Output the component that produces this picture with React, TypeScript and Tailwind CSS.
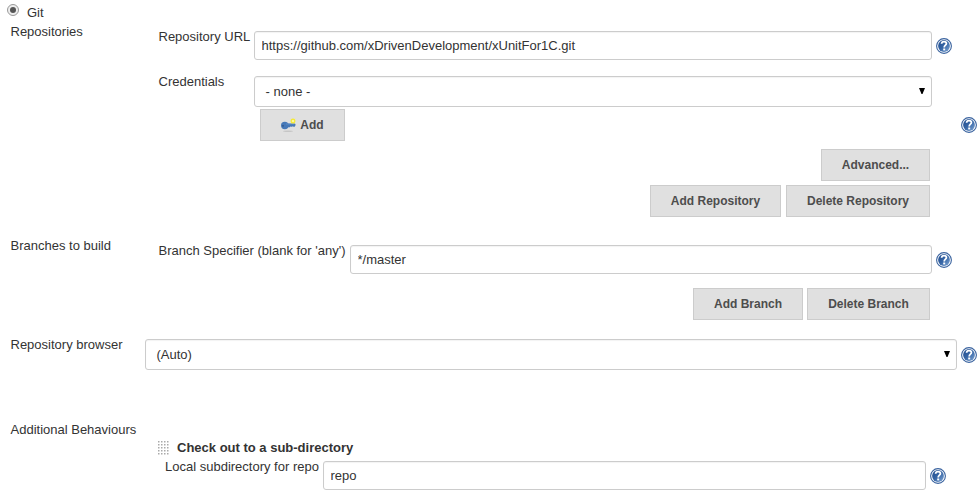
import type { ReactNode } from "react";

function Help({ className = "" }: { className?: string }) {
  return (
    <svg className={`size-4 shrink-0 ${className}`} viewBox="0 0 16 16" role="img" aria-label="Help">
      <defs>
        <linearGradient id="helpFill" x1="0" y1="0" x2="1" y2="1">
          <stop offset="0" stopColor="#1f4a8c" />
          <stop offset="0.5" stopColor="#3766a6" />
          <stop offset="1" stopColor="#83a9d6" />
        </linearGradient>
      </defs>
      <circle cx="8" cy="8" r="7.4" fill="#fff" stroke="#3a639f" strokeWidth="1.1" />
      <circle cx="8" cy="8" r="5.9" fill="url(#helpFill)" />
      <path d="M5.6 5.8C5.7 4.2 6.7 3.7 8 3.7c1.5 0 2.4.8 2.4 1.9C10.4 7.2 8.2 7.2 8.2 9.4" fill="none" stroke="#fff" strokeWidth="1.8" />
      <rect x="7.2" y="10.5" width="2" height="1.9" fill="#fff" />
    </svg>
  );
}

function KeyIcon() {
  return (
    <svg className="size-4 shrink-0" viewBox="0 0 16 16" aria-hidden="true">
      <ellipse cx="8" cy="14.3" rx="5" ry="0.7" fill="#c6c6c6" />
      <path d="M6 6.4h8.8l.9 1.4-1 2h-1.2l-.8-.6-.9.7-.9-.6-1 1H6z" fill="#4779b8" />
      <ellipse cx="4.8" cy="8.5" rx="3.8" ry="3.7" fill="#4779b8" />
      <circle cx="3" cy="8.8" r="0.9" fill="#2f5588" />
      <path d="M6 7h8" stroke="#6d98cc" strokeWidth="0.6" />
      <path d="m13 .8.7 1.3 1.6-.4-.4 1.6 1.1.7-1.1.8.4 1.6-1.6-.4-.7 1.2-.7-1.2-1.6.4.4-1.6-1.2-.8 1.2-.7-.4-1.6 1.6.4z" fill="#f5ea3b" />
      <circle cx="13" cy="4" r="1" fill="#fffcbb" />
    </svg>
  );
}

function Button({ className, children }: { className: string; children: ReactNode }) {
  return (
    <button
      type="button"
      className={`flex h-8 shrink-0 items-center justify-center border border-[#ccc] bg-[#e0e0e0] text-[12px] leading-4 font-bold text-[#4d4d4d] ${className}`}
    >
      {children}
    </button>
  );
}

function TextBox({ value, className }: { value: string; className: string }) {
  return (
    <input
      type="text"
      defaultValue={value}
      className={`h-[29px] shrink-0 rounded-[3px] border border-[#ccc] bg-white pr-1.5 pl-[6.5px] shadow-[inset_0_1px_1px_rgba(0,0,0,0.05)] outline-none ${className}`}
    />
  );
}

function SelectBox({ value, className }: { value: string; className: string }) {
  return (
    <div
      className={`flex h-[31px] shrink-0 items-center justify-between rounded-[3px] border border-[#ccc] bg-white pr-[6px] pl-[10.5px] shadow-[inset_0_1px_1px_rgba(0,0,0,0.05)] ${className}`}
    >
      <span>{value}</span>
      <svg className="mb-px h-[6px] w-[6px]" viewBox="0 0 6 6" aria-hidden="true">
        <path d="M0 0h6L3.5 6H2.5z" fill="#000" />
      </svg>
    </div>
  );
}

function DragHandle() {
  return (
    <svg className="mt-[2px] h-[14px] w-[11px] shrink-0" viewBox="0 0 11 14" aria-hidden="true">
      {[0, 3, 6, 9, 12].map((y) =>
        [0, 3, 6, 9].map((x) => <rect key={`${x}-${y}`} x={x} y={y} width="1.5" height="1.5" fill="#aaa" />),
      )}
    </svg>
  );
}

export default function App() {
  return (
    <div className="h-[499px] w-[979px] overflow-hidden bg-white font-['Liberation_Sans',Arial,sans-serif] text-[13px] leading-4 text-[#333]">
      <div className="flex h-[23px] pt-1 pl-[7px]">
        <span className="flex size-3 items-center justify-center rounded-full border border-[#999] bg-[#eee]">
          <span className="size-1.5 rounded-full bg-[#555]" />
        </span>
        <span className="pt-px pl-2">Git</span>
      </div>

      <section className="flex h-[214px] pl-[10px]">
        <div className="w-[148px] shrink-0 pt-px pl-[0.5px]">Repositories</div>
        <div className="flex grow flex-col">
          <div className="flex h-[53px] pt-2">
            <div className="-mt-[2px] w-[96px] shrink-0 pl-[0.5px]">Repository URL</div>
            <TextBox value="https://github.com/xDrivenDevelopment/xUnitFor1C.git" className="w-[678px]" />
            <Help className="mt-[7px] ml-1" />
          </div>
          <div className="flex h-[33px]">
            <div className="-mt-[2px] w-[96px] shrink-0 pl-[0.5px]">Credentials</div>
            <SelectBox value="- none -" className="w-[678px]" />
          </div>
          <div className="flex h-10 items-start justify-between pr-[2px] pl-[102px]">
            <Button className="w-[85px] gap-1 pr-px">
              <KeyIcon />
              Add
            </Button>
            <Help className="mt-2" />
          </div>
          <div className="flex h-9 justify-end pr-[49px]">
            <Button className="w-[109px]">Advanced...</Button>
          </div>
          <div className="flex justify-end gap-[5px] pr-[49px]">
            <Button className="w-[131px]">Add Repository</Button>
            <Button className="w-[144px]">Delete Repository</Button>
          </div>
        </div>
      </section>

      <section className="flex h-[99px] pl-[10px]">
        <div className="w-[148px] shrink-0 pt-px pl-[0.5px]">Branches to build</div>
        <div className="flex grow flex-col">
          <div className="flex h-[51px] pt-2">
            <div className="-mt-[2px] w-[192px] shrink-0 pl-[0.5px]">Branch Specifier (blank for 'any')</div>
            <TextBox value="*/master" className="w-[582px]" />
            <Help className="mt-[7px] ml-1" />
          </div>
          <div className="flex justify-end gap-1 pr-[49px]">
            <Button className="w-[110px]">Add Branch</Button>
            <Button className="w-[123px]">Delete Branch</Button>
          </div>
        </div>
      </section>

      <section className="flex h-[85px] pl-[10px]">
        <div className="w-[135px] shrink-0 pt-px pl-[0.5px]">Repository browser</div>
        <SelectBox value="(Auto)" className="mt-[3px] w-[812px]" />
        <Help className="mt-[11px] ml-1" />
      </section>

      <section className="pl-[10px]">
        <div className="h-[18px] pt-px pl-[0.5px]">Additional Behaviours</div>
        <div className="flex h-[19px] gap-2 pl-[148px]">
          <DragHandle />
          <span className="pt-px font-bold">Check out to a sub-directory</span>
        </div>
        <div className="flex pl-[155px]">
          <div className="w-[158px] shrink-0 pt-px">Local subdirectory for repo</div>
          <TextBox value="repo" className="mt-[3px] w-[603px]" />
          <Help className="mt-[10px] ml-1" />
        </div>
      </section>
    </div>
  );
}
